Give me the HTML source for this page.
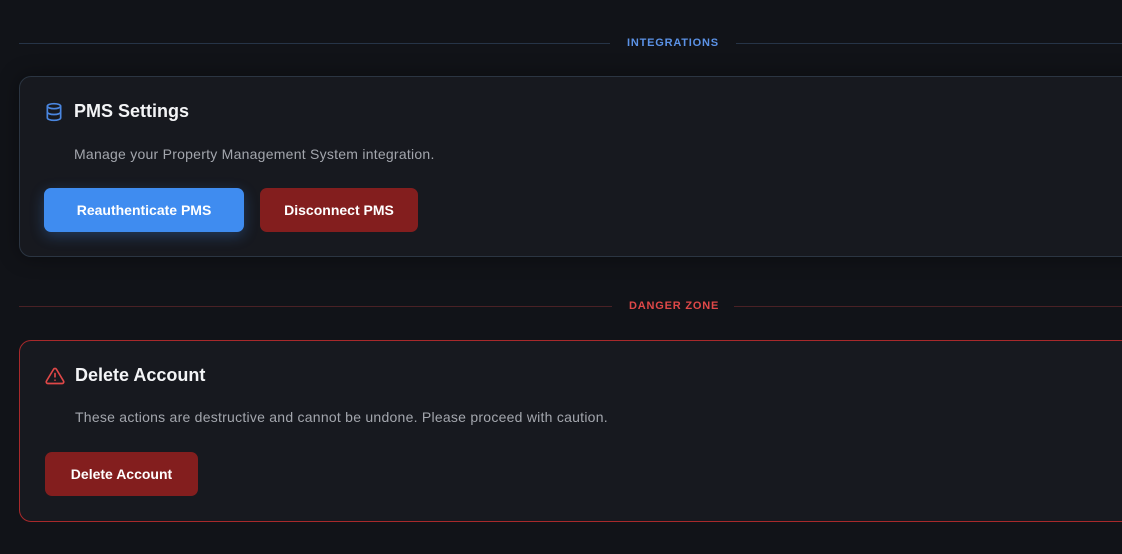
<!DOCTYPE html>
<html><head><meta charset="utf-8"><style>
*{margin:0;padding:0;box-sizing:border-box}
body{width:1122px;height:554px;background:#111318;font-family:"Liberation Sans",sans-serif;position:relative;overflow:hidden}
.line{position:absolute;height:1px}
.lbl{position:absolute;font-size:11px;font-weight:bold;letter-spacing:.8px}
.card{position:absolute;left:19px;width:1130px;border-radius:12px;background:#17191f}
.title{position:absolute;font-size:18px;font-weight:bold;color:#f3f4f6}
.desc{position:absolute;font-size:14px;letter-spacing:.25px;color:#a3a6ad}
.btn{position:absolute;border-radius:7px;color:#fff;font-size:14px;font-weight:bold;display:flex;align-items:center;justify-content:center}
</style></head><body>
<div class="line" style="left:19px;width:591px;top:43px;background:#263447"></div>
<div class="lbl" style="left:627px;top:37px;color:#5b92e6">INTEGRATIONS</div>
<div class="line" style="left:736px;width:400px;top:43px;background:#263447"></div>

<div class="card" style="top:76px;height:181px;border:1px solid #2b3542;box-shadow:0 0 20px rgba(0,0,0,.4)">
<svg style="position:absolute;left:24px;top:25px" width="20" height="20" viewBox="0 0 24 24" fill="none" stroke="#4a86e0" stroke-width="2" stroke-linecap="round"><ellipse cx="12" cy="5" rx="8" ry="3"/><path d="M4 5v14c0 1.7 3.6 3 8 3s8-1.3 8-3V5"/><path d="M4 12c0 1.7 3.6 3 8 3s8-1.3 8-3"/></svg>
<div class="title" style="left:54px;top:24px">PMS Settings</div>
<div class="desc" style="left:54px;top:69px">Manage your Property Management System integration.</div>
<div class="btn" style="left:24px;top:111px;width:200px;height:44px;background:#3f8cf0;box-shadow:0 4px 14px rgba(63,140,240,.3)">Reauthenticate PMS</div>
<div class="btn" style="left:240px;top:111px;width:158px;height:44px;background:#831e1e">Disconnect PMS</div>
</div>

<div class="line" style="left:19px;width:593px;top:306px;background:#4a2125"></div>
<div class="lbl" style="left:629px;top:300px;color:#e04848">DANGER ZONE</div>
<div class="line" style="left:734px;width:400px;top:306px;background:#4a2125"></div>

<div class="card" style="top:340px;height:182px;border:1.5px solid #a8292b">
<svg style="position:absolute;left:25px;top:25px" width="20" height="20" viewBox="0 0 24 24" fill="none" stroke="#e04848" stroke-width="2" stroke-linecap="round" stroke-linejoin="round"><path d="M10.3 3.9L1.8 18a2 2 0 0 0 1.7 3h17a2 2 0 0 0 1.7-3L13.7 3.9a2 2 0 0 0-3.4 0z"/><path d="M12 9v4M12 17h.01"/></svg>
<div class="title" style="left:55px;top:24px">Delete Account</div>
<div class="desc" style="left:55px;top:68px">These actions are destructive and cannot be undone. Please proceed with caution.</div>
<div class="btn" style="left:25px;top:111px;width:153px;height:44px;background:#831e1e">Delete Account</div>
</div>
</body></html>
